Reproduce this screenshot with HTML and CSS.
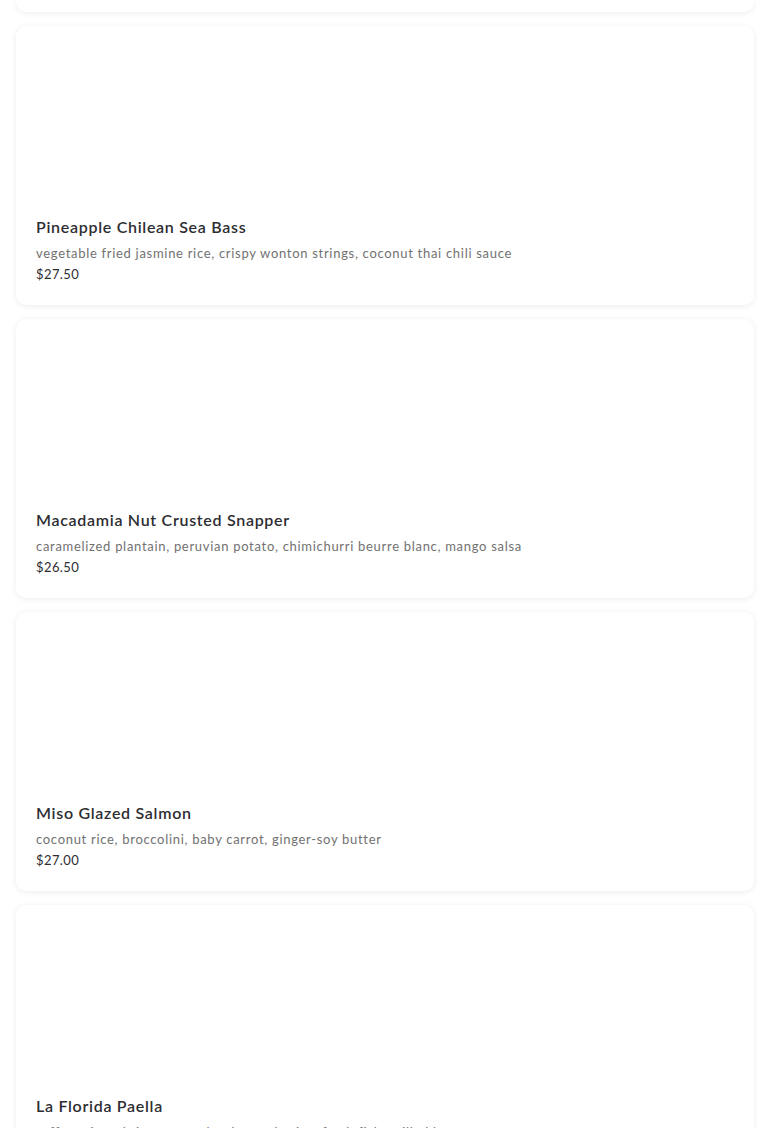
FILE: index.html
```html
<!DOCTYPE html>
<html lang="en">
<head>
    <meta charset="UTF-8">
    <meta name="viewport" content="width=device-width, initial-scale=1.0">
    <title>Entrées</title>
    <link rel="stylesheet" href="styles.css">
</head>
<body>
    <div class="menu-list">
        <!-- page is scrolled: only the bottom edge of the previous card shows -->
        <div class="menu-item menu-item-tail"></div>

        <div class="menu-item">
            <div class="item-photo"></div>
            <h3 class="item-name">Pineapple Chilean Sea Bass</h3>
            <p class="item-desc">vegetable fried jasmine rice, crispy wonton strings, coconut thai chili sauce</p>
            <p class="item-price">$27.50</p>
        </div>

        <div class="menu-item">
            <div class="item-photo"></div>
            <h3 class="item-name">Macadamia Nut Crusted Snapper</h3>
            <p class="item-desc">caramelized plantain, peruvian potato, chimichurri beurre blanc, mango salsa</p>
            <p class="item-price">$26.50</p>
        </div>

        <div class="menu-item">
            <div class="item-photo"></div>
            <h3 class="item-name">Miso Glazed Salmon</h3>
            <p class="item-desc">coconut rice, broccolini, baby carrot, ginger-soy butter</p>
            <p class="item-price">$27.00</p>
        </div>

        <div class="menu-item">
            <div class="item-photo"></div>
            <h3 class="item-name">La Florida Paella</h3>
            <p class="item-desc">saffron rice, shrimp, mussels, clams, chorizo, fresh fish, grilled lemon, sweet peas</p>
            <p class="item-price">$29.00</p>
        </div>
    </div>
</body>
</html>
```

FILE: styles.css
```css
body {
    font-family: Lato, "Noto Sans", sans-serif;
    background-color: #ffffff;
    color: #2d2d32;
    margin: 0;
    padding: 0 16px;
}

.menu-list {
    display: flex;
    flex-direction: column;
    gap: 14px;
}

.menu-item {
    background-color: #fff;
    border-radius: 10px;
    box-shadow: 0 1px 6px rgba(0, 0, 0, 0.08);
    padding: 20px 20px 21px;
}

.menu-item-tail {
    height: 12px;
    padding: 0;
    border-radius: 0 0 10px 10px;
}

.item-photo {
    height: 170px;
}

.item-name {
    margin: 0;
    font-size: 16px;
    font-weight: 600;
    line-height: 22px;
    letter-spacing: 0.7px;
    color: #2d2d32;
}

.item-desc {
    margin: 5px 0 0;
    font-size: 13px;
    line-height: 20px;
    letter-spacing: 0.7px;
    color: #717171;
}

.item-price {
    margin: 1px 0 0;
    font-size: 13px;
    line-height: 20px;
    letter-spacing: 0.4px;
    color: #2d2d32;
}
```
